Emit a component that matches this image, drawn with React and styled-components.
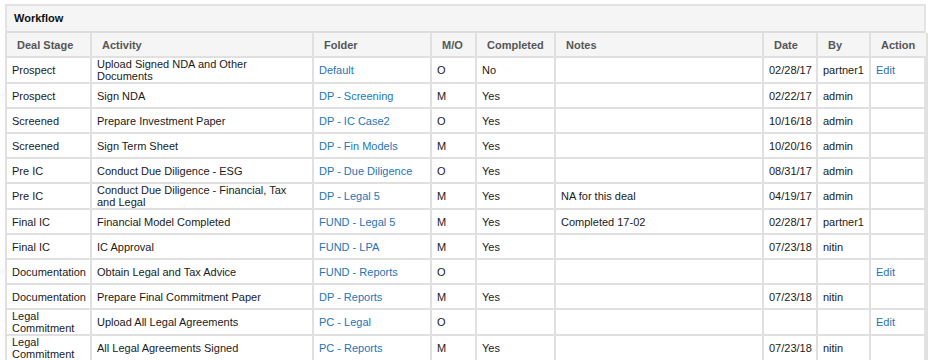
import styled, { createGlobalStyle } from "styled-components";

const GlobalStyle = createGlobalStyle`
  body {
    margin: 0;
    padding: 4px 0 0 5px;
    background: #ffffff;
    font-family: "Liberation Sans", Arial, sans-serif;
  }
`;

const columns = [
  { title: "Deal Stage", width: 85 },
  { title: "Activity", width: 222 },
  { title: "Folder", width: 118 },
  { title: "M/O", width: 45 },
  { title: "Completed", width: 79 },
  { title: "Notes", width: 208 },
  { title: "Date", width: 54 },
  { title: "By", width: 53 },
  { title: "Action", width: 57 },
];

const rows = [
  ["Prospect", "Upload Signed NDA and Other Documents", "Default", "O", "No", "", "02/28/17", "partner1", true],
  ["Prospect", "Sign NDA", "DP - Screening", "M", "Yes", "", "02/22/17", "admin", false],
  ["Screened", "Prepare Investment Paper", "DP - IC Case2", "O", "Yes", "", "10/16/18", "admin", false],
  ["Screened", "Sign Term Sheet", "DP - Fin Models", "M", "Yes", "", "10/20/16", "admin", false],
  ["Pre IC", "Conduct Due Diligence - ESG", "DP - Due Diligence", "O", "Yes", "", "08/31/17", "admin", false],
  ["Pre IC", "Conduct Due Diligence - Financial, Tax and Legal", "DP - Legal 5", "M", "Yes", "NA for this deal", "04/19/17", "admin", false],
  ["Final IC", "Financial Model Completed", "FUND - Legal 5", "M", "Yes", "Completed 17-02", "02/28/17", "partner1", false],
  ["Final IC", "IC Approval", "FUND - LPA", "M", "Yes", "", "07/23/18", "nitin", false],
  ["Documentation", "Obtain Legal and Tax Advice", "FUND - Reports", "O", "", "", "", "", true],
  ["Documentation", "Prepare Final Commitment Paper", "DP - Reports", "M", "Yes", "", "07/23/18", "nitin", false],
  ["Legal Commitment", "Upload All Legal Agreements", "PC - Legal", "O", "", "", "", "", true],
  ["Legal Commitment", "All Legal Agreements Signed", "PC - Reports", "M", "Yes", "", "07/23/18", "nitin", false],
];

const App = () => {
  return (
    <>
      <GlobalStyle />
      <Panel>
        <PanelHeader>Workflow</PanelHeader>
        <Table>
          <colgroup>
            {columns.map((c) => (
              <col key={c.title} style={{ width: c.width }} />
            ))}
          </colgroup>
          <thead>
            <tr>
              {columns.map((c) => (
                <Th key={c.title}>{c.title}</Th>
              ))}
            </tr>
          </thead>
          <tbody>
            {rows.map((r, i) => (
              <tr key={i}>
                <Td>{r[0]}</Td>
                <Td>
                  <Wrap>{r[1]}</Wrap>
                </Td>
                <Td>
                  <Link>{r[2]}</Link>
                </Td>
                <Td>{r[3]}</Td>
                <Td>{r[4]}</Td>
                <Td>{r[5]}</Td>
                <Td $tight>{r[6]}</Td>
                <Td>{r[7]}</Td>
                <Td>{r[8] && <Link>Edit</Link>}</Td>
              </tr>
            ))}
          </tbody>
        </Table>
      </Panel>
    </>
  );
};

export default App;

const Panel = styled.div`
  width: 921px;
  border: 2px solid #e3e3e3;
  border-bottom: none;
  box-sizing: border-box;
`;

const PanelHeader = styled.div`
  height: 25px;
  line-height: 25px;
  padding-left: 7px;
  background: #f5f5f5;
  font-size: 11px;
  font-weight: bold;
  color: #111;
  border-bottom: 2px solid #dcdcd8;
`;

const Table = styled.table`
  width: 921px;
  margin-left: -2px;
  border-collapse: collapse;
  table-layout: fixed;
  font-size: 11px;
  color: #1a1a1a;
`;

const Th = styled.th`
  height: 23px;
  padding: 0 0 0 10px;
  background: #f5f5f5;
  border: 2px solid #e0e0e0;
  border-top: none;
  text-align: left;
  font-weight: bold;
  color: #555;
  white-space: nowrap;
`;

const Td = styled.td`
  height: 23px;
  padding: 0 ${(p) => (p.$tight ? "2px" : "5px")} 0 5px;
  border: 2px solid #e0e0e0;
  vertical-align: middle;
  line-height: 12px;
  overflow: hidden;
`;

const Wrap = styled.div`
  max-width: 196px;
`;

const Link = styled.span`
  color: #2574b8;
  cursor: pointer;
`;
